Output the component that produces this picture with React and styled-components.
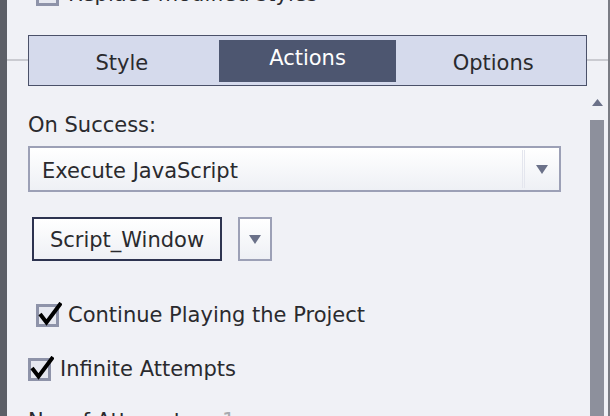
import React from 'react';
import styled, { createGlobalStyle } from 'styled-components';

const GlobalStyle = createGlobalStyle`
  html, body {
    margin: 0;
    padding: 0;
    background: #f0f1f6;
    overflow: hidden;
  }
  body {
    font-family: 'DejaVu Sans', 'Liberation Sans', sans-serif;
    color: #2a2a2e;
  }
`;

const Panel = styled.div`
  display: flex;
  width: 610px;
  height: 416px;
  overflow: hidden;
  background: #f0f1f6;
`;

const LeftEdge = styled.div`
  width: 7px;
  background: #5c5f67;
  flex-shrink: 0;
`;

const RightEdge = styled.div`
  width: 2px;
  background: #7a7c84;
  flex-shrink: 0;
`;

const Body = styled.div`
  flex: 1;
  display: flex;
  flex-direction: column;
  min-width: 0;

  & > * {
    flex-shrink: 0;
  }
`;

const TopRow = styled.div`
  display: flex;
  align-items: center;
  gap: 6px;
  height: 26px;
  margin-top: -19px;
  padding-left: 29px;
  font-size: 21px;
  line-height: 25px;
  white-space: nowrap;
`;

const TabSection = styled.div`
  margin-top: 28px;
  padding: 0 21px;
  background: linear-gradient(
    to bottom,
    transparent 24px,
    #cacbd1 24px,
    #cacbd1 26px,
    transparent 26px
  );
`;

const TabBar = styled.div`
  display: flex;
  height: 49px;
  border: 1px solid #4b5169;
  background: #d5daec;
`;

const Tab = styled.div`
  flex: 1;
  padding: 4px 4px 3px;
  display: flex;
`;

const TabLabel = styled.span`
  flex: 1;
  display: flex;
  align-items: center;
  justify-content: center;
  font-size: 21px;
  padding-top: ${(p) => (p.$active ? '0' : '3px')};
  padding-bottom: ${(p) => (p.$active ? '6px' : '0')};
  background: ${(p) => (p.$active ? '#4d5670' : 'transparent')};
  color: ${(p) => (p.$active ? '#ffffff' : '#2a2a2e')};
`;

const Content = styled.div`
  flex: 1 1 auto !important;
  display: flex;
  min-height: 0;
`;

const Form = styled.div`
  flex: 1;
  padding: 27px 0 0 21px;
  display: flex;
  flex-direction: column;
  min-width: 0;

  & > * {
    flex-shrink: 0;
  }
`;

const Label = styled.div`
  font-size: 21px;
  line-height: 25px;
  white-space: nowrap;
`;

const Select = styled.div`
  margin-top: 8px;
  width: 533px;
  height: 46px;
  box-sizing: border-box;
  border: 2px solid #9ca0b6;
  background: linear-gradient(to bottom, #ffffff, #eef0f5);
  display: flex;
  align-items: center;
  padding: 3px 0 0 12px;
  font-size: 21px;
`;

const SelectText = styled.span`
  flex: 1;
  white-space: nowrap;
`;

const SelectArrow = styled.span`
  width: 34px;
  height: 38px;
  margin-top: -3px;
  display: flex;
  align-items: center;
  justify-content: center;
  border-left: 3px double #e4e6ee;
`;

const ButtonRow = styled.div`
  margin-top: 25px;
  padding-left: 4px;
  display: flex;
  gap: 16px;
`;

const Button = styled.div`
  width: 190px;
  height: 44px;
  box-sizing: border-box;
  border: 2px solid #2d3350;
  background: linear-gradient(to bottom, #ffffff, #eef0f5);
  display: flex;
  align-items: center;
  justify-content: center;
  padding-top: 2px;
  font-size: 21px;
`;

const DropButton = styled.div`
  width: 34px;
  height: 44px;
  box-sizing: border-box;
  border: 2px solid #9ca0b6;
  background: linear-gradient(to bottom, #ffffff, #eef0f5);
  display: flex;
  align-items: center;
  justify-content: center;
`;

const CheckRow = styled.div`
  display: flex;
  align-items: center;
  gap: 6px;
  margin-top: ${(p) => p.$top}px;
  padding-left: ${(p) => p.$indent}px;
  font-size: 21px;
  line-height: 25px;
  white-space: nowrap;
`;

const AttemptsRow = styled.div`
  display: flex;
  margin-top: 27px;
  font-size: 21px;
  line-height: 25px;
  white-space: nowrap;
`;

const AttemptsValue = styled.span`
  margin-left: 22px;
  color: #a8a9ae;
`;

const Scrollbar = styled.div`
  width: 14px;
  margin-right: 4px;
  padding-top: 13px;
  display: flex;
  flex-direction: column;
  align-items: center;
`;

const Thumb = styled.div`
  margin-top: 14px;
  width: 14px;
  flex: 1;
  background: #8d909c;
`;

const Triangle = ({ up, w = 12, h = 9, color = '#6b7189' }) => (
  <svg width={w} height={h} viewBox={`0 0 ${w} ${h}`}>
    <polygon
      points={up ? `0,${h} ${w},${h} ${w / 2},0` : `0,0 ${w},0 ${w / 2},${h}`}
      fill={color}
    />
  </svg>
);

const CheckBox = ({ checked }) => (
  <svg width="26" height="26" viewBox="0 0 26 26" style={{ flexShrink: 0 }}>
    <rect x="1.5" y="3.5" width="20" height="20" fill="#e6e8f0" stroke="#8e93a9" strokeWidth="3" />
    {checked && (
      <path
        d="M4 12 L10.5 20.5 L25 1"
        fill="none"
        stroke="#000"
        strokeWidth="4"
        strokeLinecap="butt"
        strokeLinejoin="miter"
      />
    )}
  </svg>
);

const tabs = ['Style', 'Actions', 'Options'];

export default function App() {
  return (
    <>
      <GlobalStyle />
      <Panel>
        <LeftEdge />
        <Body>
          <TopRow>
            <CheckBox />
            <span>Replace modified styles</span>
          </TopRow>
          <TabSection>
            <TabBar>
              {tabs.map((t) => (
                <Tab key={t}>
                  <TabLabel $active={t === 'Actions'}>{t}</TabLabel>
                </Tab>
              ))}
            </TabBar>
          </TabSection>
          <Content>
            <Form>
              <Label>On Success:</Label>
              <Select>
                <SelectText>Execute JavaScript</SelectText>
                <SelectArrow>
                  <Triangle />
                </SelectArrow>
              </Select>
              <ButtonRow>
                <Button>Script_Window</Button>
                <DropButton>
                  <Triangle />
                </DropButton>
              </ButtonRow>
              <CheckRow $top={41} $indent={8}>
                <CheckBox checked />
                <span>Continue Playing the Project</span>
              </CheckRow>
              <CheckRow $top={28} $indent={0}>
                <CheckBox checked />
                <span>Infinite Attempts</span>
              </CheckRow>
              <AttemptsRow>
                <span>No. of Attempts:</span>
                <AttemptsValue>1</AttemptsValue>
              </AttemptsRow>
            </Form>
            <Scrollbar>
              <Triangle up w={11} h={7} />
              <Thumb />
            </Scrollbar>
          </Content>
        </Body>
        <RightEdge />
      </Panel>
    </>
  );
}
